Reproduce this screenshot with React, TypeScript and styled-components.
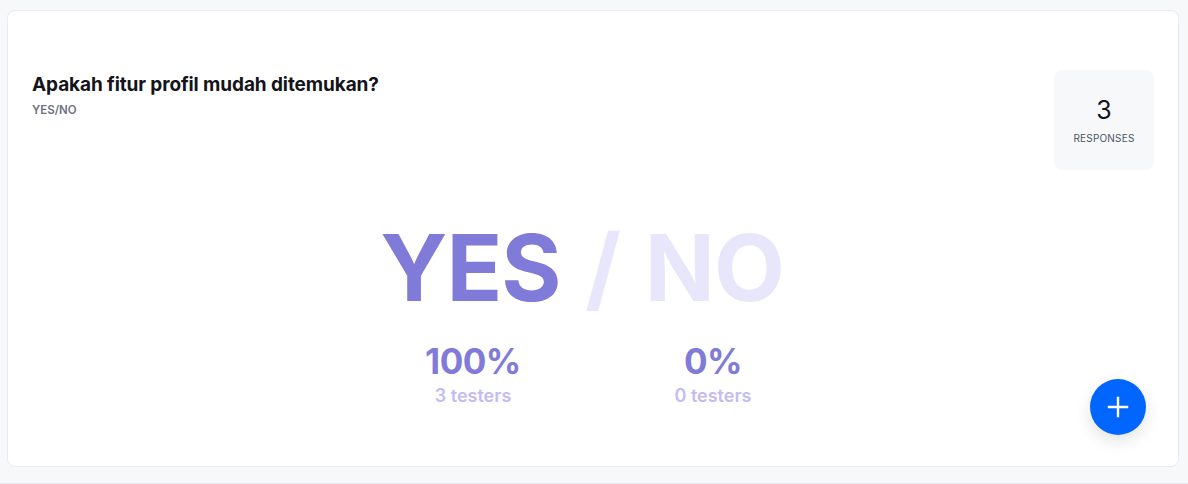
import styled, { createGlobalStyle } from "styled-components";

const GlobalStyle = createGlobalStyle`
  html, body {
    margin: 0;
    padding: 0;
    background: #f7f8fa;
    font-family: Inter, "Noto Sans", sans-serif;
  }
`;

const Page = styled.div`
  box-sizing: border-box;
  height: 484px;
  padding: 10px 9px 16px 7px;
  border-bottom: 1px solid #e6e8ec;
`;

const Card = styled.section`
  position: relative;
  box-sizing: border-box;
  height: 457px;
  background: #ffffff;
  border: 1px solid #e9ebef;
  border-radius: 8px;
  padding: 59px 24px 24px 24px;
  display: flex;
  flex-direction: column;
`;

const Header = styled.div`
  display: flex;
  justify-content: space-between;
  align-items: flex-start;
`;

const TitleBlock = styled.div`
  padding-top: 3px;
  display: flex;
  flex-direction: column;
  gap: 7px;
`;

const Title = styled.h2`
  margin: 0;
  font-size: 19px;
  font-weight: 700;
  color: #14151a;
  letter-spacing: -0.1px;
`;

const Kind = styled.span`
  font-size: 11.5px;
  font-weight: 600;
  color: #6b7280;
`;

const CountBox = styled.div`
  width: 100px;
  height: 100px;
  border-radius: 8px;
  background: #f7f8fa;
  display: flex;
  flex-direction: column;
  align-items: center;
  justify-content: center;
  gap: 9px;
  padding-top: 2px;
  box-sizing: border-box;
`;

const CountValue = styled.span`
  font-size: 25px;
  font-weight: 400;
  color: #14151a;
  line-height: 1;
`;

const CountLabel = styled.span`
  font-size: 10px;
  color: #4b5563;
  letter-spacing: 0.2px;
`;

const Result = styled.div`
  display: flex;
  flex-direction: column;
  align-items: center;
  margin-top: 52px;
`;

const BigAnswer = styled.div`
  font-size: 92px;
  font-weight: 700;
  line-height: 1;
  letter-spacing: -1px;
  word-spacing: 4px;
  white-space: pre;
  margin-right: 22px;
`;

const Word = styled.span<{ $active: boolean }>`
  color: ${(p) => (p.$active ? "#807bd8" : "#e8e6fa")};
`;

const Stats = styled.div`
  display: grid;
  grid-template-columns: 240px 240px;
  margin-top: 28px;
`;

const Stat = styled.div`
  display: flex;
  flex-direction: column;
  align-items: center;
  gap: 4px;
`;

const Percent = styled.span`
  font-size: 35px;
  font-weight: 700;
  color: #807bd8;
  line-height: 1.1;
  letter-spacing: -0.5px;
`;

const Testers = styled.span`
  font-size: 18px;
  font-weight: 600;
  color: #c3bbf5;
`;

const Fab = styled.button`
  position: absolute;
  right: 32px;
  bottom: 31px;
  width: 56px;
  height: 56px;
  border: none;
  border-radius: 50%;
  background: #0066ff;
  box-shadow: 0 6px 16px rgba(15, 23, 42, 0.12);
  display: flex;
  align-items: center;
  justify-content: center;
  padding: 0;
  cursor: pointer;
`;

const options = [
  { label: "YES", percent: "100%", testers: 3 },
  { label: "NO", percent: "0%", testers: 0 },
];

export default function App() {
  return (
    <>
      <GlobalStyle />
      <Page>
        <Card>
          <Header>
            <TitleBlock>
              <Title>Apakah fitur profil mudah ditemukan?</Title>
              <Kind>YES/NO</Kind>
            </TitleBlock>
            <CountBox>
              <CountValue>3</CountValue>
              <CountLabel>RESPONSES</CountLabel>
            </CountBox>
          </Header>
          <Result>
            <BigAnswer>
              <Word $active>YES</Word>
              <Word $active={false}> / NO</Word>
            </BigAnswer>
            <Stats>
              {options.map((o) => (
                <Stat key={o.label}>
                  <Percent>{o.percent}</Percent>
                  <Testers>{o.testers} testers</Testers>
                </Stat>
              ))}
            </Stats>
          </Result>
          <Fab aria-label="Add">
            <svg width="22" height="22" viewBox="0 0 22 22">
              <path d="M11 2v18M2 11h18" stroke="#fff" strokeWidth="2.4" strokeLinecap="square" />
            </svg>
          </Fab>
        </Card>
      </Page>
    </>
  );
}
